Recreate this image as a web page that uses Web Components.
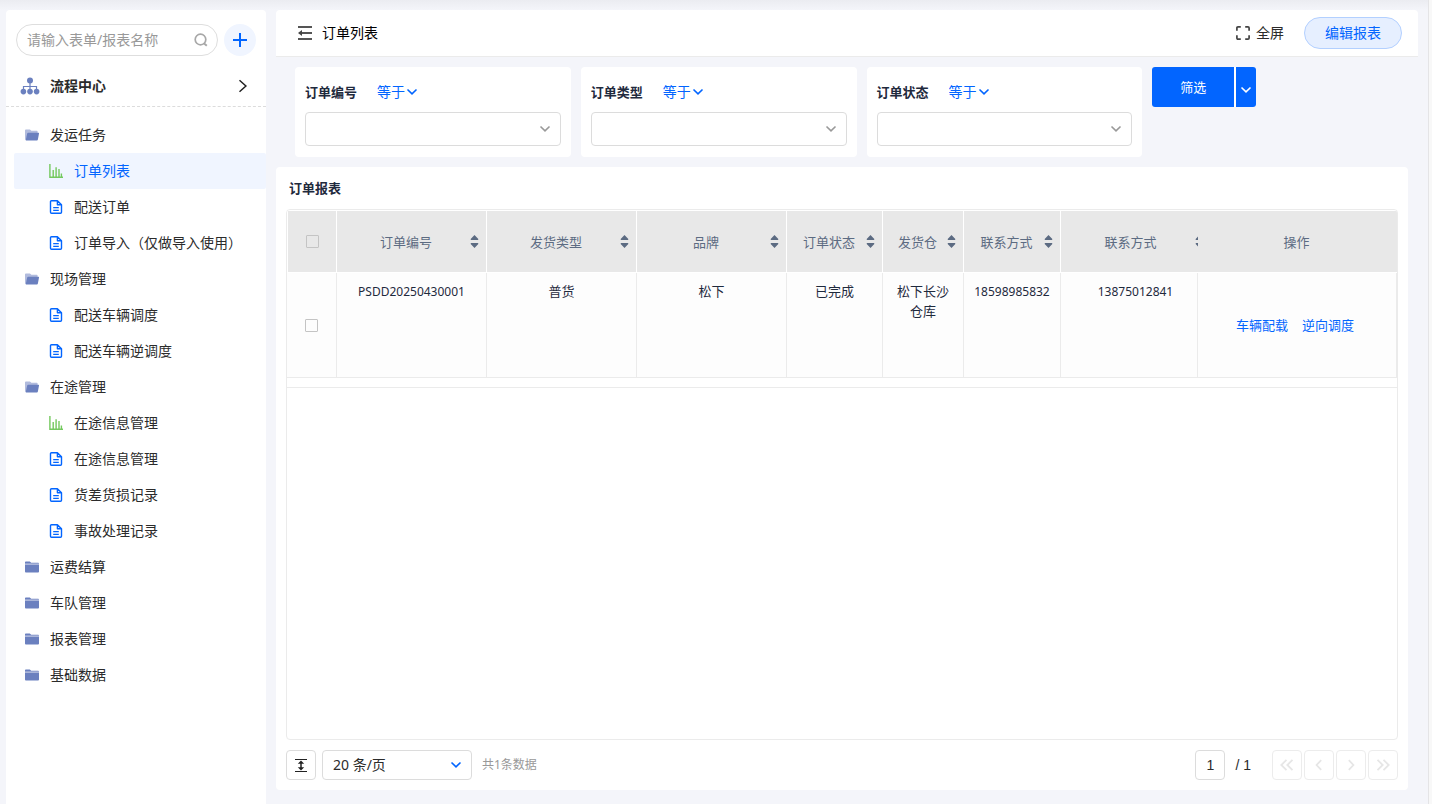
<!DOCTYPE html>
<html lang="zh-CN">
<head>
<meta charset="utf-8">
<meta name="viewport" content="width=device-width, initial-scale=1">
<title>订单列表</title>
<style>
  html, body { margin: 0; }
  body {
    --blue: #0265ff;
    --line: #ebebeb;
    --page: #f4f5fa;
    font: 14px/20px "Noto Sans", "Noto Sans CJK SC", sans-serif;
    color: #2b2b2b;
    background: #f8f8f8;
  }
</style>
</head>
<body>
<app-shell>
  <side-bar slot="side">
    <nav-group label="发运任务" open>
      <nav-item icon="chart" current>订单列表</nav-item>
      <nav-item icon="file">配送订单</nav-item>
      <nav-item icon="file">订单导入（仅做导入使用）</nav-item>
    </nav-group>
    <nav-group label="现场管理" open>
      <nav-item icon="file">配送车辆调度</nav-item>
      <nav-item icon="file">配送车辆逆调度</nav-item>
    </nav-group>
    <nav-group label="在途管理" open>
      <nav-item icon="chart">在途信息管理</nav-item>
      <nav-item icon="file">在途信息管理</nav-item>
      <nav-item icon="file">货差货损记录</nav-item>
      <nav-item icon="file">事故处理记录</nav-item>
    </nav-group>
    <nav-group label="运费结算"></nav-group>
    <nav-group label="车队管理"></nav-group>
    <nav-group label="报表管理"></nav-group>
    <nav-group label="基础数据"></nav-group>
  </side-bar>
  <page-header>订单列表</page-header>
  <filter-bar>
    <filter-field label="订单编号"></filter-field>
    <filter-field label="订单类型"></filter-field>
    <filter-field label="订单状态"></filter-field>
  </filter-bar>
  <report-card>
    <span slot="title">订单报表</span>
    <order-table></order-table>
    <page-bar slot="footer"></page-bar>
  </report-card>
</app-shell>

<script>
const ICONS = {
  search: [14, 14, '<circle cx="6.5" cy="6.5" r="5.3" fill="none" stroke="#a8a8a8" stroke-width="1.7"/><path d="M9.8 10.2 12.8 12.8" stroke="#a8a8a8" stroke-width="1.9"/>'],
  plus: [16, 16, '<path d="M8 1v14M1 8h14" stroke="#0265ff" stroke-width="2"/>'],
  tree: [20, 18, '<g fill="#6b80bf"><circle cx="10" cy="3.4" r="3"/><circle cx="3.4" cy="14.6" r="2.8"/><circle cx="10" cy="14.6" r="2.8"/><circle cx="16.6" cy="14.6" r="2.8"/></g><path d="M10 5v8M3.5 13V9.5h13V13" fill="none" stroke="#6b80bf" stroke-width="1.2"/>'],
  next: [10, 14, '<path d="m1.5 1.2 6.4 5.8-6.4 5.8" fill="none" stroke="#222" stroke-width="1.5"/>'],
  folderOpen: [14, 12, '<path d="M0 10.6V1.4Q0 .5.9.5h4l1.5 1.3h5.4q.8 0 .8.8V5H3L1 11z" fill="#b1bbdd"/><path d="M3.1 3.8h10.3q.8 0 .6.8l-1.1 6q-.2.9-1 .9H1.4q-.8 0-.6-.8l1.3-6q.2-.9 1-.9z" fill="#6b80bf"/>'],
  folder: [14, 12, '<path d="M0 2.8V1.3Q0 .5.8.5h4l1.4 1.3h7q.8 0 .8.8v.2z" fill="#6b80bf"/><path d="M0 2.8h14v1H0z" fill="#b1bbdd"/><path d="M0 3.8h14v6.8q0 .9-.9.9H.9q-.9 0-.9-.9z" fill="#6b80bf"/>'],
  chart: [14, 14, '<path d="M.9 0v13.2H14M4.2 6v7M7.1 3.2V13M10 5v8M12.4 9.5V13" fill="none" stroke="#74c95e" stroke-width="1.4"/>'],
  file: [14, 14, '<path d="M8.4.7H2.5q-1 0-1 1v10.6q0 1 1 1h9q1 0 1-1V4.8zM8.4.7v4.1h4.1M4.2 7.6h5.6M4.2 10.4h5.6" fill="none" stroke="#0265ff" stroke-width="1.4" stroke-linejoin="round"/>'],
  collapse: [16, 16, '<path d="M1 2h14M5 8h10M1 14h14" stroke="#555" stroke-width="1.9"/><path d="M1 8l4-3v6z" fill="#444"/>'],
  full: [14, 14, '<path d="M.9 4.8V2Q.9.9 2 .9h2.8M9.2.9H12q1.1 0 1.1 1.1v2.8M13.1 9.2V12q0 1.1-1.1 1.1H9.2M4.8 13.1H2Q.9 13.1.9 12V9.2" fill="none" stroke="#444" stroke-width="1.7"/>'],
  down: [12, 8, '<path d="m1.5 1.5 4.5 4.4 4.5-4.4" fill="none" stroke="currentColor" stroke-width="1.6"/>'],
  sort: [9, 13, '<path d="M4.5 0 8.3 4Q8.6 5 7.6 5H1.4Q.4 5 .7 4zM4.5 13 .7 9Q.4 8 1.4 8h6.2q1 0 .7 1z" fill="#5c6b82"/>'],
  height: [14, 16, '<path d="M1 2.5h12M1 14.5h12" stroke="#222" stroke-width="1.2"/><path d="M7 5v7" stroke="#222" stroke-width="1.5"/><path d="m7 3.6 3.2 3.2H3.8zM7 13.4l3.2-3.2H3.8z" fill="#222"/>'],
  first: [14, 12, '<path d="M6.5.8 1.3 6l5.2 5.2M12.5.8 7.3 6l5.2 5.2" fill="none" stroke="currentColor" stroke-width="1.8"/>'],
  prev: [14, 12, '<path d="M9.2 1.2 4.6 6l4.6 4.8" fill="none" stroke="currentColor" stroke-width="1.8"/>'],
  forward: [14, 12, '<path d="M4.8 1.2 9.4 6l-4.6 4.8" fill="none" stroke="currentColor" stroke-width="1.8"/>'],
  last: [14, 12, '<path d="M1.5.8 6.7 6l-5.2 5.2M7.5.8l5.2 5.2-5.2 5.2" fill="none" stroke="currentColor" stroke-width="1.8"/>']
};

const BASE = `
  *, *::before { box-sizing: border-box; }
  button, input, select { font: inherit; color: inherit; margin: 0; padding: 0; border: 0; background: none; border-radius: 0; }
  button { cursor: pointer; }
  select { appearance: none; cursor: pointer; outline: none; }
  a { color: inherit; text-decoration: none; }
`;

function define(name, render) {
  customElements.define(name, class extends HTMLElement {
    constructor() {
      super();
      const root = this.attachShadow({ mode: "open" });
      const tpl = document.createElement("template");
      tpl.innerHTML = `<style>${BASE}</style>` + render(this);
      root.append(tpl.content.cloneNode(true));
    }
  });
}

define("ui-icon", el => {
  const [w, h, body] = ICONS[el.getAttribute("name")];
  return `<style>:host{display:inline-flex;flex:none}svg{display:block}</style>
    <svg width="${w}" height="${h}" viewBox="0 0 ${w} ${h}" aria-hidden="true">${body}</svg>`;
});

define("app-shell", () => `
  <style>
    :host {
      display: grid; grid-template-columns: 260px minmax(0, 1fr); column-gap: 10px;
      box-sizing: border-box; min-height: 100vh; margin-right: 3px;
      padding: 10px 0 0 6px; border-right: 1px solid #e4e4e6;
      background: linear-gradient(#ebecf1, #f4f5fa 10px) var(--page);
    }
    main { display: flex; flex-direction: column; padding-bottom: 14px; }
    ::slotted(report-card) { flex: 1; }
  </style>
  <slot name="side"></slot>
  <main><slot></slot></main>`);

define("side-bar", () => `
  <style>
    :host { display: block; background: #fff; border-radius: 4px 4px 0 0; }
    form { display: flex; align-items: center; gap: 6px; padding: 14px 10px 0; }
    label { flex: 1; min-width: 0; display: flex; align-items: center; height: 32px; padding: 0 9px 0 10px; border: 1px solid #dedede; border-radius: 16px; }
    input { flex: 1; min-width: 0; outline: none; }
    input::placeholder { color: #999; opacity: 1; }
    .add { display: grid; place-items: center; width: 32px; height: 32px; border-radius: 50%; background: #f0f5ff; }
    .center { display: flex; align-items: center; gap: 10px; height: 41px; margin-top: 10px; padding: 0 18px 0 14px; border-bottom: 1px dashed #dcdcdc; font-weight: 700; }
    .center span { flex: 1; }
    nav { padding: 10px 0 0 8px; }
  </style>
  <form>
    <label><input type="text" placeholder="请输入表单/报表名称" aria-label="请输入表单/报表名称"><ui-icon name="search"></ui-icon></label>
    <button class="add" type="button" aria-label="新建"><ui-icon name="plus"></ui-icon></button>
  </form>
  <a class="center" href="#flow"><ui-icon name="tree"></ui-icon><span>流程中心</span><ui-icon name="next"></ui-icon></a>
  <nav><slot></slot></nav>`);

define("nav-group", el => `
  <style>
    :host { display: block; }
    button { display: flex; align-items: center; gap: 11px; width: 100%; height: 36px; padding: 0 11px; text-align: left; }
  </style>
  <button type="button" aria-expanded="${el.hasAttribute("open")}">
    <ui-icon name="${el.hasAttribute("open") ? "folderOpen" : "folder"}"></ui-icon>${el.getAttribute("label")}
  </button>
  <slot></slot>`);

define("nav-item", el => `
  <style>
    :host { display: block; }
    a { display: flex; align-items: center; gap: 11px; height: 36px; padding-left: 35px; white-space: nowrap; border-radius: 2px; }
    :host([current]) a { background: #f0f5ff; color: var(--blue); }
  </style>
  <a href="#form"><ui-icon name="${el.getAttribute("icon")}"></ui-icon><span><slot></slot></span></a>`);

define("page-header", () => `
  <style>
    :host { display: flex; align-items: center; height: 46px; margin-right: 10px; padding: 0 16px 0 21px; background: #fff; border-bottom: 1px solid #ebebeb; border-radius: 4px 4px 0 0; }
    h1 { flex: 1; margin: 0 0 0 9px; font-size: 14px; font-weight: 400; color: #000; }
    button { display: flex; align-items: center; }
    .full { gap: 6px; margin-right: 20px; }
    .edit { justify-content: center; width: 98px; height: 32px; border: 1px solid #b3d0ff; border-radius: 16px; background: #e6efff; color: var(--blue); }
  </style>
  <button type="button" aria-label="收起"><ui-icon name="collapse"></ui-icon></button>
  <h1><slot></slot></h1>
  <button class="full" type="button"><ui-icon name="full"></ui-icon>全屏</button>
  <button class="edit" type="button">编辑报表</button>`);

define("filter-bar", () => `
  <style>
    :host { display: grid; grid-template-columns: repeat(4, minmax(0, 1fr)); gap: 10px; padding: 10px 0 10px 19px; }
    .run { display: flex; align-items: flex-start; }
    .split { display: flex; gap: 2px; background: #fff; border-radius: 3px; }
    button { height: 40px; background: var(--blue); color: #fff; font-size: 13px; }
    .go { width: 82px; border-radius: 3px 0 0 3px; }
    .more { display: grid; place-items: center; width: 20px; padding-top: 6px; border-radius: 0 3px 3px 0; }
  </style>
  <slot></slot>
  <div class="run"><div class="split">
    <button class="go" type="button">筛选</button>
    <button class="more" type="button" aria-label="更多"><ui-icon name="down"></ui-icon></button>
  </div></div>`);

define("filter-field", el => `
  <style>
    :host { display: block; box-sizing: border-box; padding: 10px 10px 11px; background: #fff; border-radius: 4px; }
    .head { display: flex; align-items: center; gap: 20px; height: 30px; margin-bottom: 5px; }
    label { font-size: 13px; font-weight: 700; color: #1f2a3d; }
    .op { display: flex; align-items: center; gap: 1px; color: var(--blue); }
    .box { position: relative; display: flex; align-items: center; color: #999; }
    .box select { width: 100%; height: 34px; padding: 0 30px 0 10px; border: 1px solid #dcdcdc; border-radius: 4px; color: #2b2b2b; }
    .box ui-icon { position: absolute; right: 10px; pointer-events: none; }
  </style>
  <div class="head">
    <label for="value">${el.getAttribute("label")}</label>
    <span class="op"><select aria-label="条件"><option>等于</option></select><ui-icon name="down"></ui-icon></span>
  </div>
  <div class="box"><select id="value"><option></option></select><ui-icon name="down"></ui-icon></div>`);

define("report-card", () => `
  <style>
    :host { display: flex; flex-direction: column; margin-right: 20px; padding: 0 10px 10px; background: #fff; border-radius: 4px; }
    h2 { margin: 0; padding: 11px 3px; font-size: 13px; font-weight: 700; color: #1f2a3d; }
    .frame { flex: 1; overflow: hidden; border: 1px solid var(--line); border-radius: 4px; }
    footer { padding-top: 10px; }
  </style>
  <h2><slot name="title"></slot></h2>
  <div class="frame"><slot></slot></div>
  <footer><slot name="footer"></slot></footer>`);

const COLUMNS = [
  ["订单编号", 150, "PSDD20250430001"],
  ["发货类型", 150, "普货"],
  ["品牌", 150, "松下"],
  ["订单状态", 96, "已完成"],
  ["发货仓", 81, "松下长沙仓库"],
  ["联系方式", 97, "18598985832"],
  ["联系方式", 137, "13875012841"]
];

define("order-table", () => `
  <style>
    :host { display: block; border-bottom: 1px solid var(--line); padding-bottom: 9px; }
    table { width: 100%; table-layout: fixed; border-collapse: separate; border-spacing: 0; font-size: 13px; }
    th, td { padding: 0; text-align: center; overflow: hidden; }
    th { height: 63px; border: 1px solid #fff; border-left-width: 0; background: #e8e8e8; color: #5c6b82; font-weight: 400; }
    th:first-child { border-left-width: 1px; }
    th:last-child, th.under { border-right-width: 0; }
    th:last-child { padding-right: 2px; }
    td { height: 105px; border: 0 solid var(--line); border-width: 0 1px 1px 0; background: #fdfdfd; color: #1f2a3d; vertical-align: top; }
    td.mid { vertical-align: middle; }
    .head { display: flex; align-items: center; padding: 0 7px 0 5px; }
    .head span { flex: 1; white-space: nowrap; }
    .head button { display: flex; }
    .value { padding: 8px 10px; }
    .number { padding-top: 9px; font-size: 12px; }
    .under .head, .under .value { width: calc(100% + 13px); }
    input { appearance: none; display: block; width: 13px; height: 13px; margin: 0 auto; border: 1px solid #c4c4c4; border-radius: 1px; }
    .links { display: flex; justify-content: center; gap: 14px; padding-right: 4px; color: var(--blue); }
  </style>
  <table>
    <colgroup><col style="width:50px">${COLUMNS.map(c => `<col style="width:${c[1]}px">`).join("")}<col style="width:199px"></colgroup>
    <thead><tr>
      <th><input type="checkbox" aria-label="全选"></th>
      ${COLUMNS.map((c, i) => `<th class="${i === 6 ? "under" : ""}"><div class="head"><span>${c[0]}</span><button type="button" aria-label="排序"><ui-icon name="sort"></ui-icon></button></div></th>`).join("")}
      <th>操作</th>
    </tr></thead>
    <tbody><tr>
      <td class="mid"><input type="checkbox" aria-label="选择"></td>
      ${COLUMNS.map((c, i) => `<td class="${i === 6 ? "under" : ""}"><div class="value ${/^\w+$/.test(c[2]) ? "number" : ""}">${c[2]}</div></td>`).join("")}
      <td class="mid"><div class="links"><a href="#load">车辆配载</a><a href="#reverse">逆向调度</a></div></td>
    </tr></tbody>
  </table>`);

define("page-bar", () => `
  <style>
    :host { display: flex; align-items: center; }
    button, input, select { height: 30px; border: 1px solid #dcdcdc; border-radius: 4px; }
    button { display: grid; place-items: center; width: 30px; }
    .size { position: relative; display: flex; align-items: center; margin: 0 10px 0 6px; color: var(--blue); }
    .size select { width: 150px; padding: 0 10px; color: #2b2b2b; }
    .size ui-icon { position: absolute; right: 10px; pointer-events: none; }
    .total { flex: 1; font-size: 12px; color: #999; }
    .page { display: flex; align-items: center; gap: 10px; margin-right: 21px; font-family: "Liberation Sans", sans-serif; }
    input { width: 30px; text-align: center; outline: none; }
    .steps { display: flex; gap: 2px; }
    .steps button { border-color: #ececec; color: #e6e6e6; }
  </style>
  <button type="button" aria-label="行高"><ui-icon name="height"></ui-icon></button>
  <span class="size"><select aria-label="每页条数"><option>20 条/页</option></select><ui-icon name="down"></ui-icon></span>
  <span class="total">共1条数据</span>
  <span class="page"><input type="text" value="1" aria-label="页码"><span>/ 1</span></span>
  <span class="steps">
    <button type="button" aria-label="首页"><ui-icon name="first"></ui-icon></button>
    <button type="button" aria-label="上一页"><ui-icon name="prev"></ui-icon></button>
    <button type="button" aria-label="下一页"><ui-icon name="forward"></ui-icon></button>
    <button type="button" aria-label="末页"><ui-icon name="last"></ui-icon></button>
  </span>`);
</script>
</body>
</html>
